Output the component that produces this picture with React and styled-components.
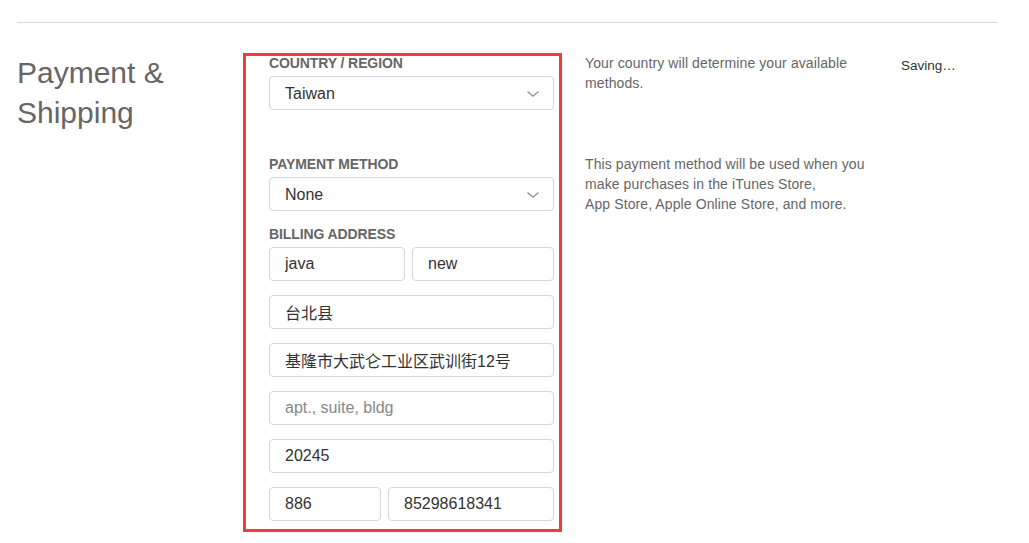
import React from "react";
import styled, { createGlobalStyle } from "styled-components";

const Global = createGlobalStyle`
  html, body { margin: 0; padding: 0; background: #fff; }
  body { font-family: "Liberation Sans", Arial, sans-serif; }
  * { box-sizing: border-box; }
`;

const Page = styled.div`
  padding: 22px 32px 0 17px;
`;

const Divider = styled.hr`
  margin: 0;
  border: 0;
  border-top: 1px solid #d6d6d6;
`;

const Section = styled.section`
  display: grid;
  grid-template-columns: 226px 319px 323px auto;
  column-gap: 0;
  margin-top: 30px;
  align-items: start;
`;

const Title = styled.h2`
  margin: 0;
  font-size: 30px;
  line-height: 40px;
  font-weight: 400;
  color: #666;
  letter-spacing: 0;
`;

const FormColumn = styled.div`
  border: 3px solid #f43a3a;
  padding: 0 5px 8px 23px;
  display: flex;
  flex-direction: column;
`;

const Field = styled.div`
  display: flex;
  flex-direction: column;
  margin-bottom: ${(p) => p.$after || 0}px;
`;

const Label = styled.div`
  font-size: 14px;
  line-height: 15px;
  font-weight: 700;
  color: #666;
  text-transform: uppercase;
  margin-bottom: 5px;
  letter-spacing: -0.1px;
`;

const Stack = styled.div`
  display: flex;
  flex-direction: column;
  gap: 14px;
`;

const Row = styled.div`
  display: grid;
  grid-template-columns: ${(p) => p.$cols};
  gap: 7px;
`;

const Input = styled.input`
  display: block;
  width: 100%;
  height: 34px;
  margin: 0;
  padding: 0 10px 0 15px;
  border: 1px solid #d6d6d6;
  border-radius: 4px;
  background: #fff;
  font-family: "Liberation Sans", "Noto Sans CJK SC", Arial, sans-serif;
  font-size: 16px;
  color: #333;
  outline: none;
  &::placeholder { color: #888; }
`;

const SelectWrap = styled.div`
  position: relative;
`;

const Select = styled.select`
  display: block;
  width: 100%;
  height: 34px;
  margin: 0;
  padding: 0 36px 0 15px;
  border: 1px solid #d6d6d6;
  border-radius: 4px;
  background: #fff;
  font-family: "Liberation Sans", Arial, sans-serif;
  font-size: 16px;
  color: #333;
  appearance: none;
  -webkit-appearance: none;
  outline: none;
`;

const Chevron = styled.svg`
  position: absolute;
  right: 15px;
  top: 15px;
  pointer-events: none;
`;

const HintColumn = styled.div`
  padding-left: 23px;
  padding-top: 0;
  display: flex;
  flex-direction: column;
`;

const Hint = styled.p`
  margin: 0;
  margin-top: ${(p) => p.$before || 0}px;
  max-width: 300px;
  font-size: 14px;
  line-height: 20px;
  letter-spacing: 0.1px;
  color: #666;
`;

const Status = styled.div`
  padding-left: 16px;
  padding-top: 3px;
  font-size: 13.5px;
  line-height: 20px;
  color: #333;
`;

function Dropdown({ value }) {
  return (
    <SelectWrap>
      <Select defaultValue={value}>
        <option value={value}>{value}</option>
      </Select>
      <Chevron width="12" height="6" viewBox="0 0 12 6">
        <path d="M0.5 0.5 L6 5.2 L11.5 0.5" fill="none" stroke="#8a8a8a" strokeWidth="1.1" />
      </Chevron>
    </SelectWrap>
  );
}

export default function App() {
  return (
    <>
      <Global />
      <Page>
        <Divider />
        <Section>
          <Title>
            Payment &amp;
            <br />
            Shipping
          </Title>
          <FormColumn>
            <Field $after={47}>
              <Label>Country / Region</Label>
              <Dropdown value="Taiwan" />
            </Field>
            <Field $after={16}>
              <Label>Payment Method</Label>
              <Dropdown value="None" />
            </Field>
            <Field>
              <Label>Billing Address</Label>
              <Stack>
                <Row $cols="136px 1fr">
                  <Input defaultValue="java" />
                  <Input defaultValue="new" />
                </Row>
                <Input defaultValue="台北县" />
                <Input defaultValue="基隆市大武仑工业区武训街12号" />
                <Input placeholder="apt., suite, bldg" />
                <Input defaultValue="20245" />
                <Row $cols="112px 1fr">
                  <Input defaultValue="886" />
                  <Input defaultValue="85298618341" />
                </Row>
              </Stack>
            </Field>
          </FormColumn>
          <HintColumn>
            <Hint>Your country will determine your available methods.</Hint>
            <Hint $before={61}>
              This payment method will be used when you make purchases in the iTunes Store,
              <br />
              App Store, Apple Online Store, and more.
            </Hint>
          </HintColumn>
          <Status>Saving…</Status>
        </Section>
      </Page>
    </>
  );
}
